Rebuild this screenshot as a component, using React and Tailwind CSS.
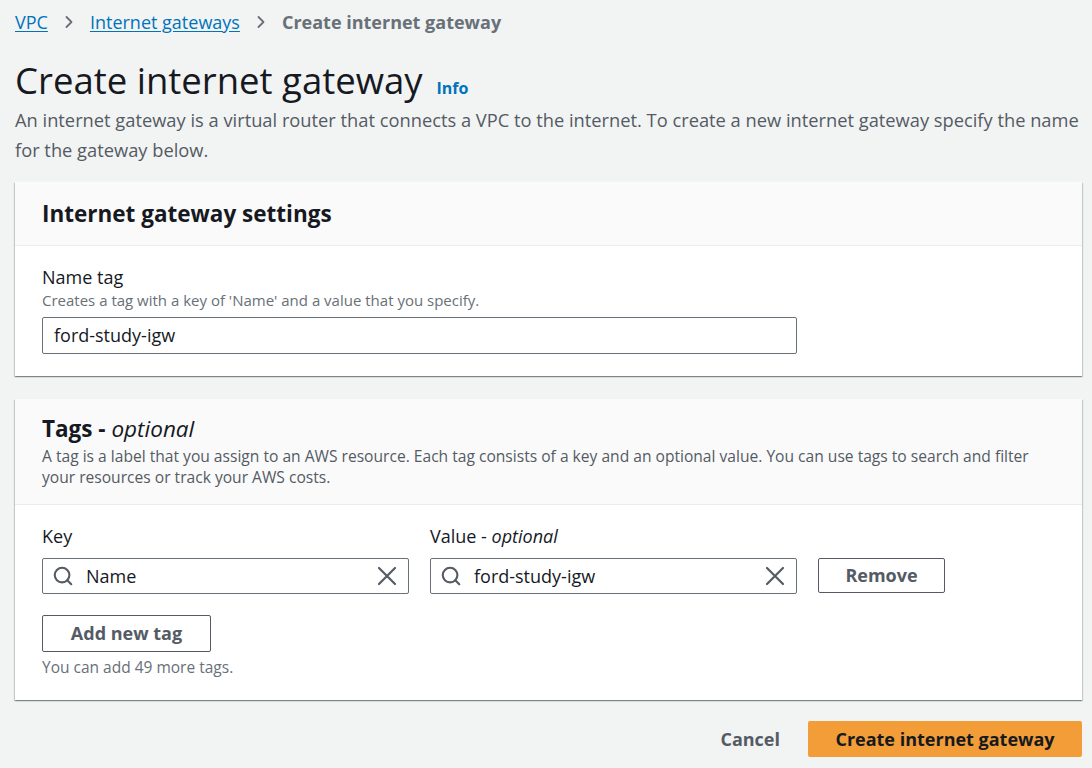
import { Search, ChevronRight } from "lucide-react";

const cardShadow =
  "shadow-[0_1px_1px_0_rgba(0,28,36,0.3),1px_1px_1px_0_rgba(0,28,36,0.15),-1px_1px_1px_0_rgba(0,28,36,0.15)]";

function ClearIcon() {
  return (
    <svg viewBox="0 0 20 20" className="w-[20px] h-[20px] text-[#545b64]" fill="none" stroke="currentColor" strokeWidth="2.2" strokeLinecap="round">
      <path d="M2 2 L18 18 M18 2 L2 18" />
    </svg>
  );
}

function TagInput({ value }) {
  return (
    <div className="flex items-center h-[36px] w-[367px] border border-[#687078] rounded-[2px] bg-white pl-[9px] pr-[11px]">
      <Search className="w-[22px] h-[22px] text-[#545b64]" strokeWidth={2.3} />
      <span className="ml-[12px] flex-1 text-[18px] text-[#16191f]">{value}</span>
      <ClearIcon />
    </div>
  );
}

export default function App() {
  return (
    <div
      className="min-h-screen bg-[#f2f3f3] text-[#16191f] pl-[15px] pr-[10px] pt-[10px] pb-[11px]"
      style={{ fontFamily: '"Open Sans", "Noto Sans", sans-serif' }}
    >
      {/* breadcrumbs */}
      <div className="flex items-center h-[24px] text-[18px]">
        <a className="text-[#0073bb] underline underline-offset-2">VPC</a>
        <ChevronRight className="w-[20px] h-[20px] mx-[11px] text-[#687078]" strokeWidth={2.2} />
        <a className="text-[#0073bb] underline underline-offset-2">Internet gateways</a>
        <ChevronRight className="w-[20px] h-[20px] mx-[11px] text-[#687078]" strokeWidth={2.2} />
        <span className="text-[#687078] font-bold">Create internet gateway</span>
      </div>

      {/* header */}
      <div className="mt-[24px] flex items-end">
        <h1 className="text-[36.5px] leading-[44px] font-normal">Create internet gateway</h1>
        <span className="ml-[14px] mb-[2px] text-[16px] font-bold text-[#0073bb]">Info</span>
      </div>
      <p className="mt-[3px] text-[18.3px] leading-[30px] text-[#545b64]">
        An internet gateway is a virtual router that connects a VPC to the internet. To create a new internet gateway specify the name
        <br />
        for the gateway below.
      </p>

      {/* settings card */}
      <div className={`mt-[17px] bg-white ${cardShadow}`}>
        <div className="bg-[#fafafa] border-b border-[#eaeded] h-[64px] flex items-center px-[27px]">
          <h2 className="text-[22.5px] font-bold">Internet gateway settings</h2>
        </div>
        <div className="px-[27px] pt-[19px] pb-[22px]">
          <div className="text-[18px] leading-[25px]">Name tag</div>
          <div className="text-[15px] leading-[20px] text-[#687078]">
            Creates a tag with a key of &#39;Name&#39; and a value that you specify.
          </div>
          <div className="mt-[7px] h-[37px] w-[755px] border border-[#687078] rounded-[2px] flex items-center px-[11px] text-[18px]">
            ford-study-igw
          </div>
        </div>
      </div>

      {/* tags card */}
      <div className={`mt-[23px] bg-white ${cardShadow}`}>
        <div className="bg-[#fafafa] border-b border-[#eaeded] h-[106px] px-[27px] pt-[15px]">
          <h2 className="text-[22.5px] leading-[30px] font-bold">
            Tags - <i className="font-normal">optional</i>
          </h2>
          <p className="mt-[2px] text-[15.6px] leading-[21px] text-[#545b64]">
            A tag is a label that you assign to an AWS resource. Each tag consists of a key and an optional value. You can use tags to search and filter
            <br />
            your resources or track your AWS costs.
          </p>
        </div>
        <div className="px-[27px] pt-[19px] pb-[23px]">
          <div className="flex gap-[21px] items-end">
            <div>
              <div className="text-[18px] leading-[25px] mb-[9px]">Key</div>
              <TagInput value="Name" />
            </div>
            <div>
              <div className="text-[18px] leading-[25px] mb-[9px]">
                Value - <i>optional</i>
              </div>
              <TagInput value="ford-study-igw" />
            </div>
            <button className="mb-[1px] h-[35px] w-[127px] border border-[#545b64] rounded-[2px] bg-white text-[18px] font-bold text-[#545b64]">
              Remove
            </button>
          </div>
          <button className="mt-[21px] h-[37px] w-[169px] border border-[#545b64] rounded-[2px] bg-white text-[18px] font-bold text-[#545b64]">
            Add new tag
          </button>
          <div className="mt-[5px] text-[15.5px] leading-[20px] text-[#687078]">You can add 49 more tags.</div>
        </div>
      </div>

      {/* actions */}
      <div className="mt-[21px] flex justify-end items-center gap-[28px]">
        <button className="text-[18px] font-bold text-[#545b64]">Cancel</button>
        <button className="h-[36px] w-[274px] rounded-[2px] bg-[#f29d38] text-[18px] font-bold text-[#16191f]">
          Create internet gateway
        </button>
      </div>
    </div>
  );
}
